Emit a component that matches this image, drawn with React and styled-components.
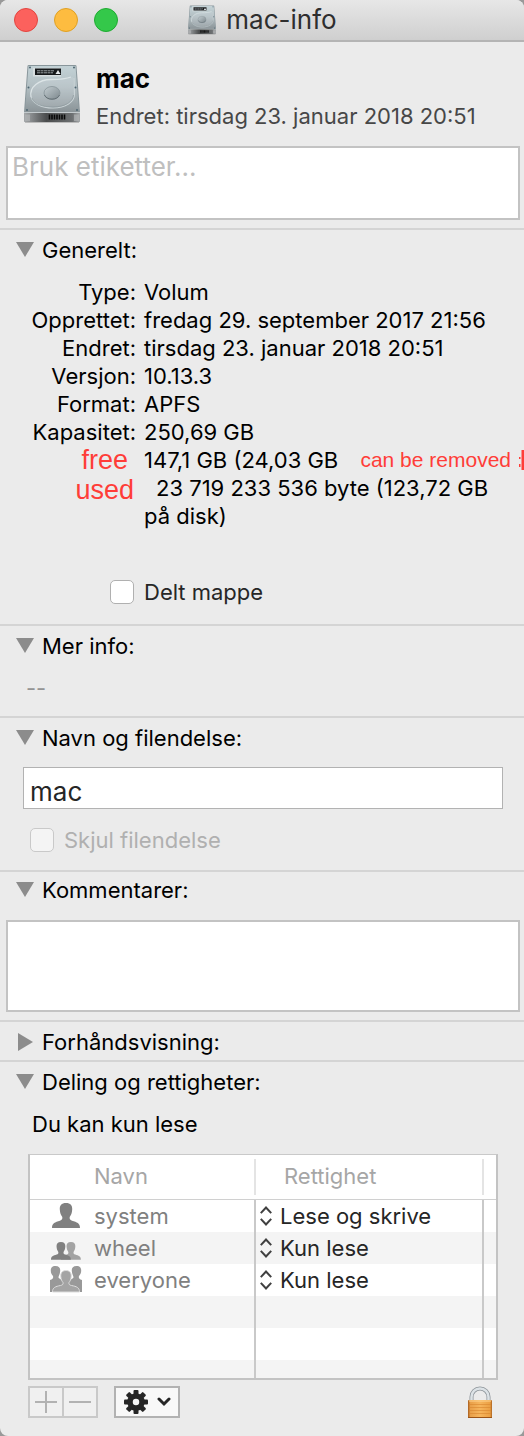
import { useState } from "react";
import styled, { createGlobalStyle } from "styled-components";

const DriveIcon = ({ size }) => (
  <svg width={size} height={size} viewBox="0 0 60 60" aria-hidden="true">
    <defs>
      <linearGradient id="lid" x1="0" y1="0" x2="0" y2="1">
        <stop offset="0" stopColor="#c3d2d6" />
        <stop offset=".45" stopColor="#b3bfc3" />
        <stop offset="1" stopColor="#8b9498" />
      </linearGradient>
      <linearGradient id="front" x1="0" y1="0" x2="1" y2="0">
        <stop offset="0" stopColor="#a5a8aa" />
        <stop offset=".12" stopColor="#8a8d8f" />
        <stop offset=".4" stopColor="#4a4c4d" />
        <stop offset=".86" stopColor="#6c6f71" />
        <stop offset="1" stopColor="#a5a8aa" />
      </linearGradient>
      <linearGradient id="hub" x1="0" y1="0" x2="1" y2="1">
        <stop offset="0" stopColor="#c3cdd1" />
        <stop offset="1" stopColor="#7c878c" />
      </linearGradient>
    </defs>
    <path d="M3 57h54v2H3z" fill="#0003" />
    <path d="M5.500 2Q5.500 1 7 1h46q1.500 0 1.500 1L58 48v8.500q0 1.500-1.500 1.500h-53Q2 58 2 56.500V48z" fill="#89969b" />
    <path d="M6.500 2h47L57 48H3z" fill="url(#lid)" />
    <path d="M2 48h56v8.500q0 1.500-1.500 1.500h-53Q2 58 2 56.500z" fill="url(#front)" />
    <path d="M2 48.500h56" stroke="#c3cacd" strokeWidth="1" />
    <path d="M3 50.500h5V57H3zM52 50.500h5V57h-5z" fill="#b0b3b5" opacity=".7" />
    <path d="M27.500 50.500v5M30 50.500v5M32.500 50.500v5M35 50.500v5M37.500 50.500v5M40 50.500v5M42.500 50.500v5" stroke="#080808" strokeWidth="1.600" />
    <path d="M11 4h28v8.500H11z" fill="#d7dee0" />
    <path d="M13 4.500h26v6.500H13z" fill="#16191b" />
    <path d="M15 6.800h17M15 8.800h16" stroke="#9ba1a4" strokeWidth="1" strokeDasharray="3 .5" />
    <path d="M36 6l2.500 4h-5z" fill="#e4e8ea" />
    <path d="M9 31c0-9 9-15.500 20-15.500 8 0 14-.5 22-2.500l1.500 17c0 8-9 14-21.500 14S9 39 9 31z" fill="#dde6e9" fillOpacity=".18" />
    <path d="M9 33c-2-10 8-17.500 20-17.500 9 0 15-.5 20-2.500" fill="none" stroke="#dce4e6" strokeWidth="1.300" />
    <path d="M52 14l.5 16c0 8-9 14-21.500 14C19 44 10 39 9 32" fill="none" stroke="#c9d2d5" strokeWidth="1.200" />
    <path d="M10 34c2 6 10 9 21 9 12 0 20-5 20.500-12" fill="none" stroke="#8a969b" strokeWidth=".7" />
    <ellipse cx="30" cy="29" rx="8" ry="6.500" fill="url(#hub)" stroke="#869398" strokeWidth=".8" />
    <path d="M22.500 31c2 5.500 13 5.500 15 0" fill="none" stroke="#5f6a6f" strokeWidth=".9" />
    <g fill="#4d6470">
      <circle cx="8" cy="3.500" r="1" />
      <circle cx="52" cy="3.500" r="1" />
      <circle cx="6.500" cy="23.500" r="1" />
      <circle cx="53.500" cy="23.500" r="1" />
      <circle cx="5" cy="46" r="1" />
      <circle cx="55" cy="46" r="1" />
    </g>
  </svg>
);

const PERSON = "M14 0c4.500 0 6.500 2.500 6.200 6.500-.2 4-1.200 5.500-2.500 7.500-.3 2 .3 3 2.300 3.700 5 1.600 8 2.300 8 7.300H0c0-5 3-5.700 8-7.300 2-.7 2.600-1.700 2.300-3.700C9 12 8 10.500 7.800 6.500 7.500 2.500 9.500 0 14 0z";

const SystemIcon = () => (
  <svg width="32" height="28" viewBox="0 0 32 28" aria-hidden="true">
    <path d={PERSON} transform="translate(2 1)" fill="#808080" />
  </svg>
);

const GroupIcon = () => (
  <svg width="32" height="28" viewBox="0 0 32 28" aria-hidden="true">
    <path d={PERSON} transform="translate(11 8) scale(.71)" fill="#a3a3a3" />
    <path d={PERSON} transform="translate(1 8) scale(.71)" fill="#808080" />
  </svg>
);

const EveryoneIcon = () => (
  <svg width="32" height="28" viewBox="0 0 32 28" aria-hidden="true">
    <path d="M5.500 0C9 0 10.500 2 10.200 5S9 9 8.500 11c0 2 3 2 5 4v11H0V14c3-1 3.500-2 3-4C1.500 8 .8 7 .8 4.500S2 0 5.500 0z" fill="#999" />
    <path d="M26.500 0C23 0 21.500 2 21.800 5s1.200 4 1.700 6c0 2-3 2-5 4v11H32V14c-3-1-3.500-2-3-4 1.500-2 2.200-3 2.200-5.500S30 0 26.500 0z" fill="#999" />
    <path d="M16 4.500c3.800 0 5.500 2.500 5.200 6-.2 3-1 4.500-2.200 6-.3 2 .5 2.500 2.500 3 5 1 8 2 8 6.500h-27c0-4.500 3-5.500 8-6.500 2-.5 2.800-1 2.500-3-1.200-1.500-2-3-2.200-6-.3-3.500 1.400-6 5.200-6z" fill="#a4a4a4" stroke="#ddd" strokeWidth="1" />
  </svg>
);

const StepperIcon = () => (
  <svg width="12" height="20" viewBox="0 0 12 20" fill="none" stroke="#404040" strokeWidth="2" aria-hidden="true">
    <path d="M.8 7.200L6 1.500l5.200 5.700M.8 12.800L6 18.500l5.200-5.700" />
  </svg>
);

const TriangleIcon = ({ open }) => (
  <svg width="18" height="18" viewBox="0 0 18 18" aria-hidden="true">
    <path d={open ? "M0 1h18L9 16z" : "M2 0v18l15-9z"} fill="#8c8c8c" />
  </svg>
);

const TEETH = [0, 45, 90, 135, 180, 225, 270, 315];

const GearIcon = () => (
  <svg width="24" height="24" viewBox="0 0 24 24" aria-hidden="true">
    <g fill="#262626">
      {TEETH.map((angle) => (
        <rect key={angle} x="9.500" y="0" width="5" height="6" rx="1" transform={`rotate(${angle} 12 12)`} />
      ))}
    </g>
    <circle cx="12" cy="12" r="6" fill="none" stroke="#262626" strokeWidth="5.500" />
  </svg>
);

const LockIcon = () => (
  <svg width="26" height="32" viewBox="0 0 26 32" aria-hidden="true">
    <defs>
      <linearGradient id="brass" x1="0" y1="0" x2="1" y2="0">
        <stop offset="0" stopColor="#a65c1c" />
        <stop offset=".1" stopColor="#e9a04a" />
        <stop offset=".5" stopColor="#f6b55d" />
        <stop offset=".92" stopColor="#eba044" />
        <stop offset="1" stopColor="#ab621f" />
      </linearGradient>
    </defs>
    <path d="M4.500 16v-5a8.500 8.500 0 0 1 17 0v5" fill="none" stroke="#8d9499" strokeWidth="4" />
    <path d="M4.500 16v-5a8.500 8.500 0 0 1 17 0v5" fill="none" stroke="#dce2e6" strokeWidth="2.500" />
    <rect x="1" y="14" width="24" height="18" rx="1" fill="url(#brass)" />
    <path d="M2 15h22" stroke="#ffd48f" />
    <path d="M2 18.500h22M2 21.500h22M2 24.500h22M2 27.500h22" stroke="#d9862f" strokeWidth="1" opacity=".6" />
    <path d="M1 31.500h24" stroke="#9c5416" />
  </svg>
);

const Disclosure = ({ title, compact, initiallyOpen = true, children }) => {
  const [open, setOpen] = useState(initiallyOpen);

  return (
    <Section>
      <Heading $compact={compact}>
        <Toggle type="button" aria-expanded={open} onClick={() => setOpen(!open)}>
          <TriangleIcon open={open} />
          {title}
        </Toggle>
      </Heading>
      {open && children}
    </Section>
  );
};

const details = [
  ["Type:", "Volum"],
  ["Opprettet:", "fredag 29. september 2017 21:56"],
  ["Endret:", "tirsdag 23. januar 2018 20:51"],
  ["Versjon:", "10.13.3"],
  ["Format:", "APFS"],
  ["Kapasitet:", "250,69 GB"],
];

const users = [
  { name: "system", Icon: SystemIcon, access: "Lese og skrive" },
  { name: "wheel", Icon: GroupIcon, access: "Kun lese" },
  { name: "everyone", Icon: EveryoneIcon, access: "Kun lese" },
];

const App = () => {
  return (
    <>
      <GlobalStyle />
      <Window>
        <TitleBar>
          <Lights>
            <Light type="button" aria-label="Lukk" $color="#fc615d" $edge="#e2453f" />
            <Light type="button" aria-label="Minimer" $color="#fdbc40" $edge="#dfa023" />
            <Light type="button" aria-label="Zoom" $color="#34c84a" $edge="#1eab31" />
          </Lights>
          <DriveIcon size={30} />
          <Title>mac-info</Title>
        </TitleBar>

        <Summary>
          <DriveIcon size={60} />
          <div>
            <VolumeName>mac</VolumeName>
            <Changed>Endret: tirsdag 23. januar 2018 20:51</Changed>
          </div>
        </Summary>
        <TextArea $height={74} aria-label="Etiketter" placeholder="Bruk etiketter..." />

        <Disclosure title="Generelt:">
          <Details>
            {details.map(([label, value]) => (
              <Detail key={label}>
                <dt>{label}</dt>
                <dd>{value}</dd>
              </Detail>
            ))}
            <Detail>
              <Note $inset={8}>free</Note>
              <Available>
                147,1 GB (24,03 GB
                <SmallNote>can be removed</SmallNote>
                <svg width="5" height="20" viewBox="0 0 5 20" aria-hidden="true">
                  <path d="M2.500 0H5v20H2.500zM0 7h1.500v2H0zM0 14h1.500v3H0z" fill="#ff3d38" />
                </svg>
              </Available>
            </Detail>
            <Detail>
              <Note $inset={2} $tall>used</Note>
              <Used>23 719 233 536 byte (123,72 GB på disk)</Used>
            </Detail>
          </Details>
          <SharedLabel>
            <Checkbox type="checkbox" />
            Delt mappe
          </SharedLabel>
        </Disclosure>

        <Disclosure title="Mer info:">
          <MoreInfo>--</MoreInfo>
        </Disclosure>

        <Disclosure title="Navn og filendelse:">
          <NameForm>
            <NameInput aria-label="Navn" defaultValue="mac" />
            <ExtensionLabel>
              <Checkbox type="checkbox" disabled />
              Skjul filendelse
            </ExtensionLabel>
          </NameForm>
        </Disclosure>

        <Disclosure title="Kommentarer:" compact>
          <Comments>
            <TextArea $height={92} aria-label="Kommentarer" />
          </Comments>
        </Disclosure>

        <Disclosure title="Forhåndsvisning:" initiallyOpen={false} />

        <Disclosure title="Deling og rettigheter:">
          <Sharing>
            <Access>Du kan kun lese</Access>
            <Table>
              <colgroup>
                <NameCol />
                <col />
                <EdgeCol />
              </colgroup>
              <thead>
                <tr>
                  <Th><HeaderCell $indent={64}>Navn</HeaderCell></Th>
                  <Th><HeaderCell $indent={28}>Rettighet</HeaderCell></Th>
                  <Th as="td" />
                </tr>
              </thead>
              <tbody>
                {users.map(({ name, Icon, access }) => (
                  <Row key={name}>
                    <td>
                      <UserCell>
                        <Icon />
                        {name}
                      </UserCell>
                    </td>
                    <td>
                      <AccessCell>
                        <StepperIcon />
                        <Select aria-label={`Rettighet for ${name}`} defaultValue={access}>
                          <option>Lese og skrive</option>
                          <option>Kun lese</option>
                        </Select>
                      </AccessCell>
                    </td>
                    <td />
                  </Row>
                ))}
                <Row><td /><td /><td /></Row>
                <Row><td /><td /><td /></Row>
                <Row $height={18}><td /><td /><td /></Row>
              </tbody>
            </Table>
            <Actions>
              <ButtonPair>
                <SmallButton type="button" aria-label="Legg til" disabled>
                  <svg width="22" height="22" viewBox="0 0 22 22" stroke="#b2b2b2" strokeWidth="2" aria-hidden="true">
                    <path d="M11 0v22M0 11h22" />
                  </svg>
                </SmallButton>
                <SmallButton type="button" aria-label="Fjern" disabled>
                  <svg width="22" height="22" viewBox="0 0 22 22" stroke="#b2b2b2" strokeWidth="2" aria-hidden="true">
                    <path d="M0 11h22" />
                  </svg>
                </SmallButton>
              </ButtonPair>
              <GearButton type="button" aria-label="Handlinger">
                <GearIcon />
                <svg width="14" height="10" viewBox="0 0 14 10" fill="none" stroke="#262626" strokeWidth="3" strokeLinecap="round" aria-hidden="true">
                  <path d="M2 2l5 5 5-5" />
                </svg>
              </GearButton>
              <LockButton type="button" aria-label="Lås">
                <LockIcon />
              </LockButton>
            </Actions>
          </Sharing>
        </Disclosure>
      </Window>
    </>
  );
};

const GlobalStyle = createGlobalStyle`
  * {
    box-sizing: border-box;
  }

  body {
    margin: 0;
    background-color: #999;
    font-family: Inter, Roboto, sans-serif;
    font-size: 22px;
    line-height: 28px;
    color: #000;
  }

  button, input, textarea, select {
    font: inherit;
    color: inherit;
    margin: 0;
    padding: 0;
  }

  svg {
    flex: none;
    display: block;
  }
`

const Window = styled.main`
  background-color: #ebebeb;
  border-radius: 8px;
  overflow: hidden;
`

const TitleBar = styled.header`
  display: grid;
  grid-template-columns: 1fr auto auto 1fr;
  align-items: center;
  gap: 9px;
  height: 42px;
  padding: 0 14px;
  background-image: linear-gradient(#e7e7e7, #cfcfcf);
  border-bottom: 2px solid #b4b4b4;
`

const Lights = styled.div`
  display: flex;
  gap: 16px;
`

const Light = styled.button`
  width: 24px;
  height: 24px;
  border-radius: 50%;
  background-color: ${({ $color }) => $color};
  border: 1px solid ${({ $edge }) => $edge};
`

const Title = styled.h1`
  margin: 0;
  font-size: 26px;
  font-weight: 400;
  color: #2e2e2e;
`

const Summary = styled.div`
  display: flex;
  gap: 14px;
  padding: 22px 22px 16px;
`

const VolumeName = styled.h2`
  margin: 0;
  font-size: 26px;
  line-height: 30px;
  font-weight: 700;
`

const Changed = styled.p`
  margin: 8px 0 0;
  color: #474747;
`

const TextArea = styled.textarea`
  display: block;
  width: calc(100% - 10px);
  height: ${({ $height }) => $height}px;
  margin: 0 4px 8px 6px;
  padding: 5px 4px;
  border: 2px solid #c3c3c3;
  background-color: #fff;
  font-size: 26px;
  resize: none;
  outline: none;

  &::placeholder {
    color: #bfbfbf;
  }
`

const Section = styled.section`
  border-top: 2px solid #d4d4d4;
`

const Heading = styled.h3`
  margin: 0;
  padding: ${({ $compact }) => ($compact ? 4 : 6)}px 16px 4px;
  font-size: 22px;
  font-weight: 400;
`

const Toggle = styled.button`
  display: flex;
  align-items: center;
  gap: 8px;
  border: none;
  background: none;
`

const Details = styled.dl`
  margin: 10px 0 48px;
`

const Detail = styled.div`
  display: grid;
  grid-template-columns: 136px 1fr;
  gap: 8px;

  dt {
    text-align: right;
  }

  dd {
    margin: 0;
  }
`

const Note = styled.dt`
  padding-right: ${({ $inset }) => $inset}px;
  font-family: "Liberation Sans", Arial, sans-serif;
  font-size: 27px;
  line-height: ${({ $tall }) => ($tall ? 32 : 28)}px;
  color: #ff3d38;
`

const Available = styled.dd`
  display: flex;
  align-items: center;
  white-space: nowrap;
`

const SmallNote = styled.span`
  margin: 0 8px 0 auto;
  font-family: "Liberation Sans", Arial, sans-serif;
  font-size: 21px;
  color: #ff3d38;
`

const Used = styled.dd`
  padding-right: 16px;
  text-indent: 12px;
`

const SharedLabel = styled.label`
  display: flex;
  align-items: center;
  gap: 10px;
  padding: 0 0 18px 110px;
  color: #262626;
`

const Checkbox = styled.input`
  appearance: none;
  width: 24px;
  height: 24px;
  border: 1px solid #b0b0b0;
  border-radius: 5px;
  background-color: #fff;

  &:disabled {
    border-color: #c9c9c9;
    background-color: #f4f4f4;
  }

  &:checked {
    background-color: #3b8ef3;
  }
`

const MoreInfo = styled.p`
  margin: 0;
  padding: 10px 26px 14px;
  color: #949494;
`

const NameForm = styled.div`
  padding: 11px 21px 16px 23px;
`

const NameInput = styled.input`
  width: 100%;
  height: 42px;
  padding: 6px 6px 0;
  border: 1px solid #b2b2b2;
  background-color: #fff;
  font-size: 26px;
  color: #262626;
  display: block;
  outline: none;
`

const ExtensionLabel = styled.label`
  display: flex;
  align-items: center;
  gap: 10px;
  margin: 17px 0 0 7px;
  color: #b0b0b0;
`

const Comments = styled.div`
  padding-top: 12px;
`

const Sharing = styled.div`
  padding: 10px 26px 18px 28px;
`

const Access = styled.p`
  margin: 0 4px 16px;
`

const Table = styled.table`
  width: 100%;
  table-layout: fixed;
  border-collapse: separate;
  border-spacing: 0;
  border: 2px solid #c3c3c3;
  border-top: 1px solid #c9c9c9;
  background-color: #fff;

  td {
    padding: 0;
  }
`

const NameCol = styled.col`
  width: 226px;
`

const EdgeCol = styled.col`
  width: 12px;
`

const Th = styled.th`
  height: 45px;
  padding: 0;
  border-bottom: 1px solid #d0d0d0;
  font-weight: 400;
  text-align: left;
`

const HeaderCell = styled.div`
  height: 36px;
  padding-left: ${({ $indent }) => $indent}px;
  border-right: 2px solid #e4e4e4;
  line-height: 34px;
  color: #a6a6a6;
`

const Row = styled.tr`
  height: ${({ $height = 32 }) => $height}px;

  &:nth-child(even) {
    background-color: #f4f4f4;
  }

  td:not(:last-child) {
    border-right: 2px solid #c9c9c9;
  }
`

const UserCell = styled.div`
  display: flex;
  align-items: center;
  gap: 12px;
  padding-left: 20px;
  color: #808080;
`

const AccessCell = styled.div`
  display: flex;
  align-items: center;
  gap: 8px;
  padding-left: 4px;
`

const Select = styled.select`
  appearance: none;
  flex: 1;
  min-width: 0;
  border: none;
  background: none;
  color: #262626;
`

const Actions = styled.div`
  display: flex;
  align-items: center;
  gap: 16px;
  margin-top: 6px;
`

const ButtonPair = styled.div`
  display: flex;
`

const SmallButton = styled.button`
  display: grid;
  place-items: center;
  width: 36px;
  height: 32px;
  border: 2px solid #c9c9c9;
  background-color: #f0f0f0;

  & + & {
    margin-left: -2px;
  }
`

const GearButton = styled.button`
  display: flex;
  align-items: center;
  justify-content: center;
  gap: 9px;
  width: 66px;
  height: 32px;
  border: 2px solid #b2b2b2;
  background-color: #f8f8f8;
`

const LockButton = styled.button`
  margin: 0 5px 0 auto;
  border: none;
  background: none;
`

export default App;
